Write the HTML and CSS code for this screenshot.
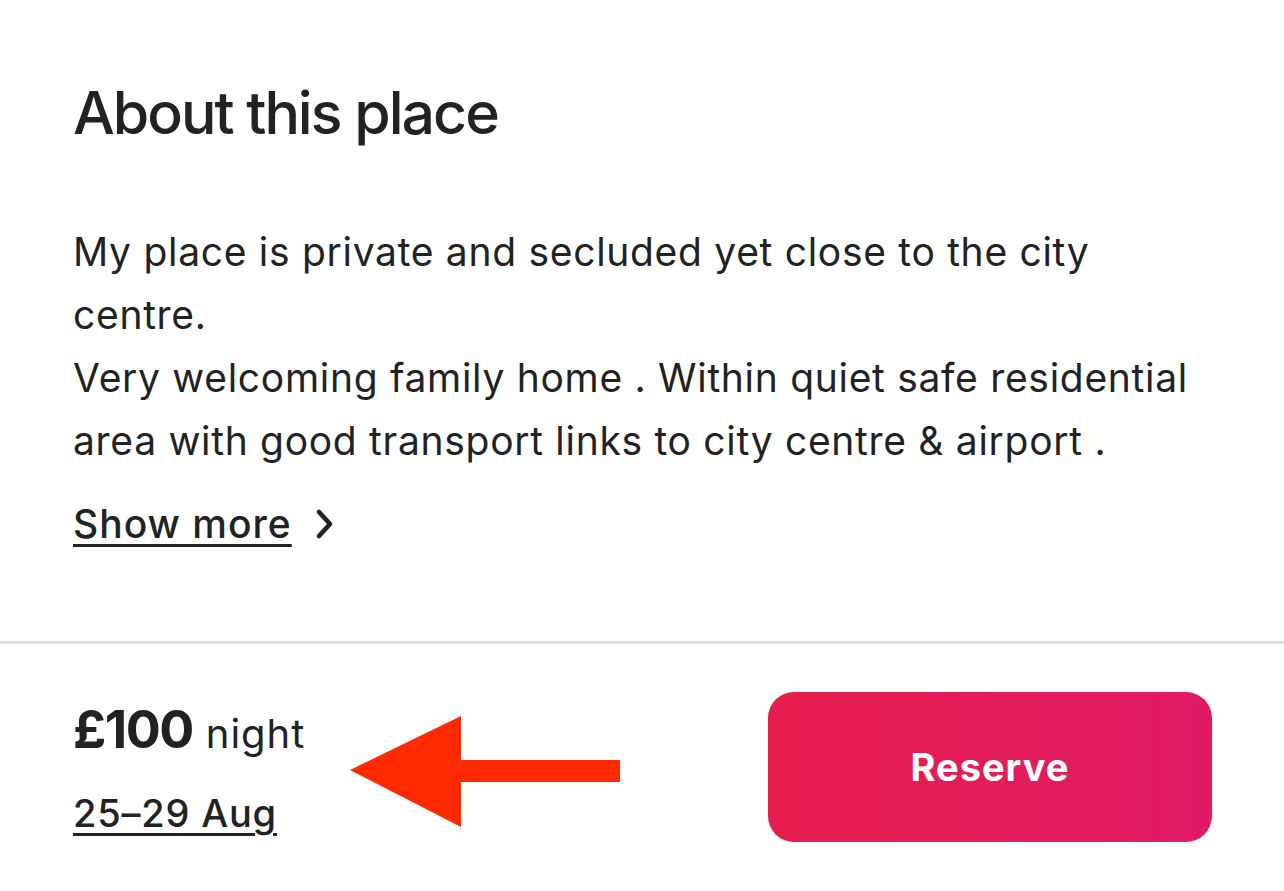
FILE: index.html
```html
<!DOCTYPE html>
<html lang="en">
<head>
<meta charset="utf-8">
<link rel="stylesheet" href="styles.css">
</head>
<body>
<main class="page">
  <section class="about">
    <h1 class="title">About this place</h1>
    <p class="desc">My place is private and secluded yet close to the city centre.<br>Very welcoming family home . Within quiet safe residential area with good transport links to city centre &amp; airport .</p>
    <a class="more" href="#"><span class="more-text">Show more</span>
      <svg class="chev" viewBox="0 0 22 32" width="22" height="32"><path d="M5 4 L16 16 L5 28" fill="none" stroke="#222" stroke-width="4.6" stroke-linecap="round" stroke-linejoin="round"/></svg>
    </a>
  </section>
  <footer class="bar">
    <div class="price">
      <div class="rate"><span class="amount">£100</span><span class="unit">night</span></div>
      <a class="dates" href="#">25–29 Aug</a>
    </div>
    <button class="reserve">Reserve</button>
    <svg class="arrow" viewBox="0 0 272 112" width="272" height="112"><polygon points="0,54 111,0 111,44 270,44 270,66 111,66 111,111" fill="#ff2a00"/></svg>
  </footer>
</main>
</body>
</html>
```
FILE: styles.css
```css
html, body {
  margin: 0;
  padding: 0;
  background: #fff;
}
body {
  font-family: Inter, "Noto Sans", sans-serif;
  color: #222222;
}
.page {
  width: 1284px;
  height: 891px;
  overflow: hidden;
  display: flex;
  flex-direction: column;
}
.about {
  padding: 76px 73px 0 73px;
  display: flex;
  flex-direction: column;
  align-items: flex-start;
  height: 644px;
  box-sizing: border-box;
  border-bottom: 3px solid #dddddd;
}
.title {
  margin: 0;
  font-size: 59px;
  line-height: 74px;
  font-weight: 500;
  letter-spacing: -2px;
}
.desc {
  margin: 70px 0 0 0;
  font-size: 39px;
  line-height: 63px;
  font-weight: 400;
  letter-spacing: 0.7px;
  width: 1138px;
}
.more {
  margin-top: 28px;
  display: flex;
  align-items: center;
  gap: 22px;
  color: #222;
  text-decoration: none;
}
.more-text {
  font-size: 39px;
  font-weight: 500;
  letter-spacing: 1px;
  line-height: 48px;
  text-decoration: underline;
  text-decoration-thickness: 3px;
  text-underline-offset: 6px;
}
.chev {
  display: block;
}
.bar {
  position: relative;
  flex: 1;
  display: flex;
  justify-content: space-between;
  align-items: flex-start;
  padding: 48px 72px 0 73px;
}
.price {
  display: flex;
  flex-direction: column;
  padding-top: 8px;
}
.rate {
  line-height: 60px;
}
.amount {
  font-size: 52px;
  font-weight: 700;
  letter-spacing: -1.5px;
}
.unit {
  margin-left: 13px;
  font-size: 40px;
  font-weight: 400;
  letter-spacing: 1px;
}
.dates {
  margin-top: 17px;
  font-size: 38px;
  line-height: 48px;
  font-weight: 500;
  letter-spacing: 0.8px;
  color: #222;
  text-decoration: underline;
  text-decoration-thickness: 3px;
  text-underline-offset: 6px;
}
.reserve {
  width: 444px;
  height: 150px;
  border: none;
  border-radius: 26px;
  background: linear-gradient(90deg, #e61e4d 0%, #e31c5f 70%, #e01a66 100%);
  color: #fff;
  font-family: Inter, "Noto Sans", sans-serif;
  font-size: 38px;
  font-weight: 700;
  letter-spacing: 1px;
}
.arrow {
  position: absolute;
  left: 350px;
  top: 72px;
}
```
